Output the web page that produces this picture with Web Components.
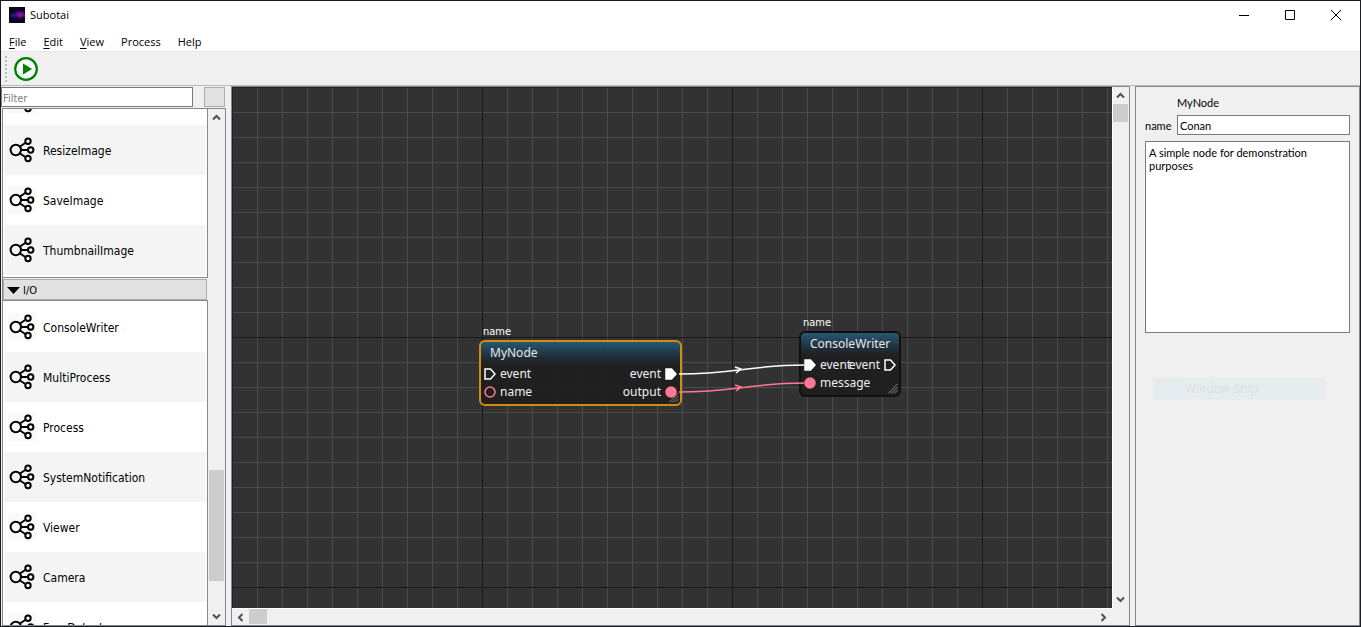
<!DOCTYPE html>
<html lang="en">
<head>
<meta charset="utf-8">
<title>Subotai</title>
<style>
html, body { margin: 0; height: 100%; }
body {
  --face: #f0f0f0;
  --frame: #828790;
  --ui: "Open Sans", "Noto Sans", sans-serif;
  --dlg: "DejaVu Sans Condensed", "Noto Sans", sans-serif;
  background: var(--face); color: #000; font: 11px/16px var(--ui);
}
</style>
</head>
<body>
<app-window>
  <title-bar slot="title">Subotai</title-bar>
  <menu-bar slot="menu"></menu-bar>
  <tool-bar slot="tools"></tool-bar>
  <node-library slot="library">
    <node-group>
      <node-item></node-item>
      <node-item>ResizeImage</node-item>
      <node-item>SaveImage</node-item>
      <node-item>ThumbnailImage</node-item>
    </node-group>
    <node-group heading="I/O">
      <node-item>ConsoleWriter</node-item>
      <node-item>MultiProcess</node-item>
      <node-item>Process</node-item>
      <node-item>SystemNotification</node-item>
      <node-item>Viewer</node-item>
      <node-item>Camera</node-item>
      <node-item>FaceDetect</node-item>
    </node-group>
  </node-library>
  <graph-view slot="graph">
    <graph-node caption="name" heading="MyNode" selected style="left:246px;top:236px;width:203px">
      <node-port kind="exec">event</node-port>
      <node-port kind="exec" side="out" filled>event</node-port>
      <node-port kind="data">name</node-port>
      <node-port kind="data" side="out" filled>output</node-port>
    </graph-node>
    <graph-node caption="name" heading="ConsoleWriter" style="left:566px;top:227px;width:102px">
      <node-port kind="exec" filled>event</node-port>
      <node-port kind="exec" side="out">event</node-port>
      <node-port kind="data" filled>message</node-port>
    </graph-node>
  </graph-view>
  <property-panel slot="props"></property-panel>
</app-window>

<script>
function define(name, html, setup) {
  const template = document.createElement("template");
  template.innerHTML = html;
  customElements.define(name, class extends HTMLElement {
    constructor() {
      super();
      this.attachShadow({ mode: "open" }).append(template.content.cloneNode(true));
    }
    connectedCallback() { if (setup) setup(this, this.shadowRoot); }
  });
}

define("app-window", `
<style>
:host { display: flex; flex-direction: column; height: 100vh; box-sizing: border-box; border: 1px solid #1b1c22; background: #fff; overflow: hidden; }
main { flex: 1; min-height: 0; display: grid; grid-template-columns: 225px minmax(0, 1fr) 225px; column-gap: 5px; background: var(--face); }
</style>
<slot name="title"></slot><slot name="menu"></slot><slot name="tools"></slot>
<main><slot name="library"></slot><slot name="graph"></slot><slot name="props"></slot></main>`);

define("title-bar", `
<style>
:host { display: flex; align-items: center; height: 28px; padding: 0 1px 1px 8px; }
.name { flex: 1; margin-left: 5px; }
button { width: 46px; height: 28px; padding: 0; border: 0; background: none; display: grid; place-items: center; }
</style>
<svg width="16" height="16" viewBox="0 0 16 16" aria-hidden="true">
  <defs><linearGradient id="g"><stop offset="0" stop-color="#06409a"/><stop offset=".35" stop-color="#3c1090"/><stop offset=".75" stop-color="#a014b4"/><stop offset="1" stop-color="#4c0a66"/></linearGradient>
  <filter id="b"><feGaussianBlur stdDeviation=".8"/></filter></defs>
  <rect width="16" height="16" fill="#0b0620"/>
  <path d="M0 7l2 2 2-3 2 1 2-3 3 2 2-2 1 2 2-1v6l-3-2-2 3-3-3-2 2-2-2-2 1-2-2z" fill="url(#g)" filter="url(#b)"/>
</svg>
<span class="name"><slot></slot></span>
<button aria-label="Minimize"><svg width="10" height="10"><path d="M0 5.500h10" stroke="#000"/></svg></button>
<button aria-label="Maximize"><svg width="10" height="10"><path d="M.5.5h9v9h-9z" fill="none" stroke="#000"/></svg></button>
<button aria-label="Close"><svg width="10" height="10"><path d="M0 0l10 10M10 0L0 10" stroke="#000"/></svg></button>`);

define("menu-bar", `
<style>
:host { display: block; padding-top: 2px; border-bottom: 1px solid #e6e6e6; }
nav { display: flex; gap: 17px; height: 19px; padding: 0 8px; align-items: center; }
button { border: 0; padding: 0; background: none; font: inherit; color: inherit; }
u { text-underline-offset: 2px; }
</style>
<nav><button><u>F</u>ile</button><button><u>E</u>dit</button><button><u>V</u>iew</button><button>Process</button><button>Help</button></nav>`);

define("tool-bar", `
<style>
:host { display: flex; align-items: center; gap: 7px; height: 32px; padding: 1px 0 0 4px; background: var(--face); border-bottom: 1px solid #b9b9b9; }
i { width: 2px; height: 26px; background: repeating-linear-gradient(#bcbcbc 0 2px, transparent 2px 4px); }
button { width: 24px; height: 24px; padding: 0; border: 0; background: none; }
svg { display: block; }
</style>
<i></i><button aria-label="Run"><svg width="24" height="24" viewBox="0 0 24 24"><circle cx="12" cy="12" r="10.800" fill="#f6f6f6" stroke="#008000" stroke-width="2.200"/><path d="M9 6.500v11l9-5.500z" fill="#008000"/></svg></button>`);

define("scroll-bar", `
<style>
:host { display: flex; flex-direction: column; width: 15px; background: #f0f0f0; }
:host([horizontal]) { flex-direction: row; width: auto; height: 16px; }
button { flex: none; width: 15px; height: 17px; padding: 0; border: 0; background: none; display: grid; place-items: center; }
:host([horizontal]) button { width: 17px; height: 16px; }
.track { flex: 1; display: flex; flex-direction: column; min-height: 0; }
:host([horizontal]) .track { flex-direction: row; }
.before { flex: var(--before, 0) 1 0; }
.thumb { flex: var(--size, 0) 0 18px; background: #cdcdcd; }
.after { flex: var(--after, 1) 1 0; }
path { fill: none; stroke: #505050; stroke-width: 2; }
:host([horizontal]) .v { display: none; }
:host([horizontal]) .h { display: block; }
.h { display: none; }
</style>
<button aria-label="Back" tabindex="-1"><svg class="v" width="9" height="7"><path d="M1 5.500L4.500 2 8 5.500"/></svg><svg class="h" width="7" height="9"><path d="M5.500 1L2 4.500 5.500 8"/></svg></button>
<div class="track"><div class="before"></div><div class="thumb"></div><div class="after"></div></div>
<button aria-label="Forward" tabindex="-1"><svg class="v" width="9" height="7"><path d="M1 1.500L4.500 5 8 1.500"/></svg><svg class="h" width="7" height="9"><path d="M1.500 1L5 4.500 1.500 8"/></svg></button>`);

define("node-library", `
<style>
:host { display: flex; flex-direction: column; min-height: 0; }
.filter { display: flex; gap: 11px; padding: 1px 1px 1px 0; }
input { flex: 1; min-width: 0; box-sizing: border-box; height: 20px; border: 1px solid #7a7a7a; padding: 2px 1px 0; font: 11px var(--dlg); }
input::placeholder { color: #808080; }
.filter button { width: 21px; height: 20px; padding: 0; border: 1px solid #adadad; background: #e1e1e1; }
.area { flex: 1; min-height: 0; display: flex; gap: 1px; border: 1px solid var(--frame); margin-left: 1px; }
.content { flex: 1; min-width: 0; overflow: hidden; margin-left: -1px; }
scroll-bar { --before: 343; --size: 93; --after: 27; margin-right: 1px; }
</style>
<div class="filter"><input type="text" placeholder="Filter" aria-label="Filter nodes"><button aria-label="Clear filter"></button></div>
<div class="area"><div class="content"><slot></slot></div><scroll-bar></scroll-bar></div>`,
(host, root) => requestAnimationFrame(() => { root.querySelector(".content").scrollTop = 36; }));

define("node-group", `
<style>
:host { display: block; }
button { display: flex; align-items: center; gap: 3px; width: calc(100% - 2px); height: 21px; margin: 1px 0 0 1px; padding: 1px 3px 0; border: 1px solid #adadad; background: #e1e1e1; font: 11px var(--dlg); color: #000; }
button[hidden] { display: none; }
section { border: 1px solid var(--frame); background: #fff; padding: 1px 1px 2px; }
</style>
<button hidden><svg width="13" height="7"><path d="M0 0h13L6.500 7z"/></svg><span></span></button>
<section><slot></slot></section>`,
(host, root) => {
  const heading = host.getAttribute("heading");
  if (heading) { root.querySelector("button").hidden = false; root.querySelector("span").textContent = heading; }
});

define("node-item", `
<style>
:host { display: flex; align-items: center; gap: 7px; height: 50px; padding-left: 4px; font: 12px/16px var(--dlg); background: #fff; }
:host(:nth-child(even)) { background: #f4f4f4; }
svg { flex: none; }
span { padding-top: 2px; }
</style>
<svg width="28" height="28" viewBox="0 0 28 28" aria-hidden="true" fill="none" stroke="#000" stroke-width="2">
  <rect width="28" height="28" fill="#f4f4f4" fill-opacity=".5" stroke="none"/>
  <path d="M12 10.500l6-4M13 14h7M12 17.500l6 4"/>
  <circle cx="7.800" cy="14" r="5.200"/><circle cx="20" cy="5.300" r="2.700"/><circle cx="22.700" cy="14" r="2.700"/><circle cx="20" cy="22.500" r="2.700"/>
</svg><span><slot></slot></span>`);

define("graph-view", `
<style>
:host { display: grid; grid-template: minmax(0, 1fr) 17px / minmax(0, 1fr) 17px; border: 1px solid var(--frame); min-height: 0; background: #f0f0f0; }
.scene { position: relative; overflow: hidden; border: solid #202020; border-width: 1px 0 0 1px; background-color: #323232;
  background-image:
    linear-gradient(90deg, #191919 1px, transparent 1px), linear-gradient(#191919 1px, transparent 1px),
    linear-gradient(90deg, #4b4b4b 1px, transparent 1px), linear-gradient(#4b4b4b 1px, transparent 1px);
  background-size: 250px 250px, 250px 250px, 25px 25px, 25px 25px;
  background-position: 249px 0, 0 249px, 24px 0, 0 24px; }
.wires { position: absolute; left: 0; top: 0; width: 100%; height: 100%; }
scroll-bar { border: solid #fff; border-width: 0 0 0 1px; margin-right: 1px; }
scroll-bar[horizontal] { border-width: 1px 0 0; margin-right: 0; height: 15px; }
</style>
<div class="scene">
  <slot></slot>
  <svg class="wires" fill="none" stroke-width="1.500">
    <g stroke="#fff"><path d="M446 286C500 286 520 277 571 277"/><path d="M502 279l6 2-5 4"/></g>
    <g stroke="#ff7896"><path d="M446 304C500 304 520 295 571 295"/><path d="M502 297l6 2-5 4"/></g>
  </svg>
</div>
<scroll-bar></scroll-bar>
<scroll-bar horizontal></scroll-bar>`);

define("graph-node", `
<style>
:host { position: absolute; color: #fff; font: 12px/18px "Noto Sans", sans-serif; }
.caption { font: 11px/16px var(--dlg); padding-left: 4px; }
.box { box-sizing: border-box; height: 66px; border: 2px solid #111; border-radius: 6px; position: relative;
  background: linear-gradient(rgba(38,90,118,.95), rgba(30,44,54,.94) 16px, rgba(30,30,30,.94) 23px); }
:host([selected]) .box { border-color: #d28c14; }
h2 { margin: 0; padding: 2px 9px 3px; font: inherit; color: #e8e8e8; white-space: nowrap; }
.ports { display: grid; grid-template-columns: 1fr 1fr; padding: 0 3px; }
.grip { position: absolute; right: 1px; bottom: 1px; stroke: #8a8a8a; }
</style>
<div class="caption"></div>
<div class="box"><h2></h2><div class="ports"><slot></slot></div>
<svg class="grip" width="10" height="10"><path d="M0 9.500L9.500 0M3 9.500L9.500 3M6 9.500L9.500 6"/></svg></div>`,
(host, root) => {
  root.querySelector(".caption").textContent = host.getAttribute("caption");
  root.querySelector("h2").textContent = host.getAttribute("heading");
});

define("node-port", `
<style>
:host { display: flex; align-items: center; gap: 4px; height: 18px; min-width: 0; color: #f0f0f0; white-space: nowrap; }
:host([side="out"]) { flex-direction: row-reverse; }
svg { flex: none; display: none; fill: none; stroke-width: 1.500; }
:host([kind="exec"]) .exec, :host([kind="data"]) .data { display: block; }
.exec { stroke: #fff; } .data { stroke: #ff7896; }
:host([filled]) .exec { fill: #fff; } :host([filled]) .data { fill: #ff7896; }
</style>
<svg class="exec" width="12" height="12"><path d="M1 1h5.500L11 6l-4.500 5H1z"/></svg>
<svg class="data" width="12" height="12"><circle cx="6" cy="6" r="5"/></svg>
<slot></slot>`);

define("property-panel", `
<style>
:host { display: grid; grid-template: 16px 20px 192px 22px / 28px 1fr; gap: 4px; align-content: start; border: 1px solid var(--frame); padding: 8px 9px 8px 9px; font: 11px/13px Lato, "Noto Sans", sans-serif; }
h2 { grid-column: 2; margin: 0; font: inherit; line-height: 16px; }
label { align-self: center; }
input, textarea { box-sizing: border-box; min-width: 0; border: 1px solid #7a7a7a; background: #fff; color: #000; font: inherit; }
input { padding: 1px 2px 0; }
textarea { grid-column: 1 / 3; margin-top: 2px; height: 192px; padding: 4px 3px; resize: none; display: block; }
.ghost { grid-column: 1 / 3; margin: 43px 24px 0 8px; height: 22px; padding-left: 32px; background: linear-gradient(90deg, #e6ebef 28px, #e7ecef 28px); color: #dcdee0; font: 12px/22px var(--ui); }
</style>
<h2>MyNode</h2>
<label for="name">name</label><input id="name" type="text" value="Conan">
<textarea aria-label="Description" readonly>A simple node for demonstration purposes</textarea>
<div class="ghost">Window Snip</div>`);
</script>
</body>
</html>
